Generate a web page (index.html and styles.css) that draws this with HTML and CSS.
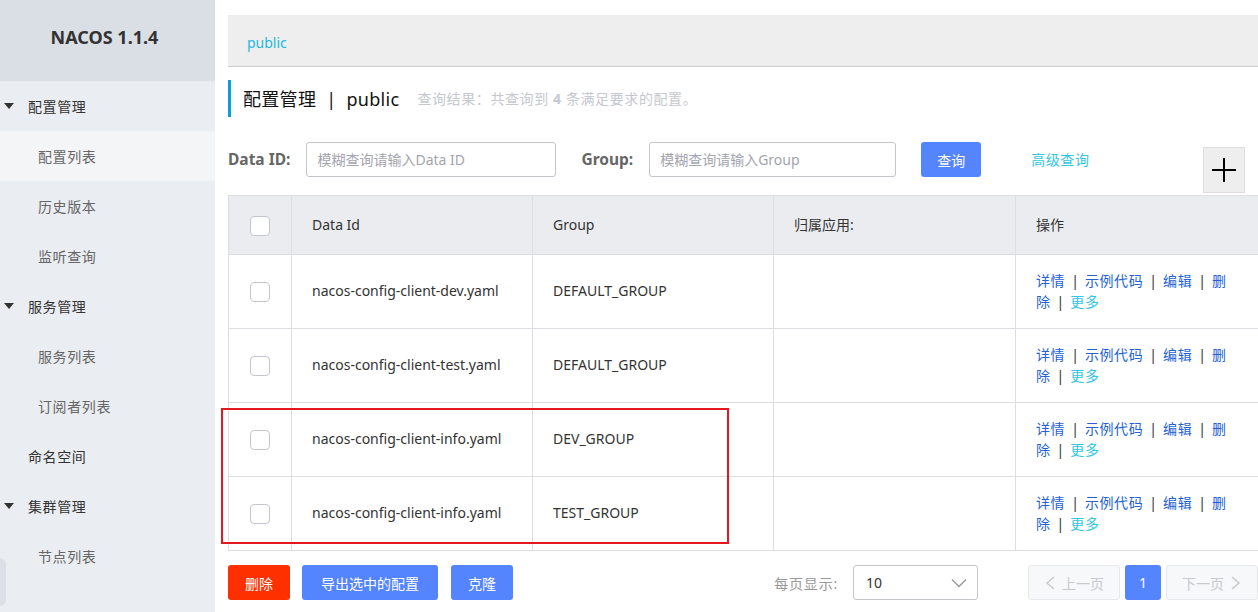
FILE: index.html
```html
<!DOCTYPE html>
<html lang="zh-CN">
<head>
<meta charset="utf-8">
<title>NACOS 1.1.4</title>
<link rel="stylesheet" href="styles.css">
</head>
<body>
<div class="app">
  <aside class="sidebar">
    <div class="brand">NACOS 1.1.4</div>
    <ul class="menu">
      <li class="group">配置管理</li>
      <li class="item active">配置列表</li>
      <li class="item">历史版本</li>
      <li class="item">监听查询</li>
      <li class="group">服务管理</li>
      <li class="item">服务列表</li>
      <li class="item">订阅者列表</li>
      <li class="top">命名空间</li>
      <li class="group">集群管理</li>
      <li class="item">节点列表</li>
    </ul>
    <div class="handle"></div>
  </aside>

  <main class="main">
    <div class="crumb"><span class="ns">public</span></div>

    <div class="title">
      <span class="title-main">配置管理<span class="title-sep">|</span>public</span>
      <span class="summary">查询结果：共查询到 <b>4</b> 条满足要求的配置。</span>
    </div>

    <div class="search">
      <label class="label">Data ID:</label>
      <input class="input" type="text" placeholder="模糊查询请输入Data ID">
      <label class="label">Group:</label>
      <input class="input input-group" type="text" placeholder="模糊查询请输入Group">
      <button class="btn btn-primary btn-query" type="button">查询</button>
      <span class="adv">高级查询</span>
      <button class="plus" type="button" aria-label="新建">
        <svg width="26" height="26" viewBox="0 0 26 26"><path d="M13 1v24M1 13h24" stroke="#000" stroke-width="2" fill="none"/></svg>
      </button>
    </div>

    <div class="table-wrap">
      <table class="grid">
        <colgroup>
          <col class="c-check"><col class="c-id"><col class="c-group"><col class="c-app"><col class="c-ops">
        </colgroup>
        <thead>
          <tr>
            <th class="cell-check"><span class="checkbox"></span></th>
            <th>Data Id</th>
            <th>Group</th>
            <th>归属应用:</th>
            <th>操作</th>
          </tr>
        </thead>
        <tbody>
          <tr>
            <td class="cell-check"><span class="checkbox"></span></td>
            <td>nacos-config-client-dev.yaml</td>
            <td>DEFAULT_GROUP</td>
            <td></td>
            <td><div class="ops"><a>详情</a><span class="sep">|</span><a>示例代码</a><span class="sep">|</span><a>编辑</a><span class="sep">|</span><a>删<wbr>除</a><span class="sep">|</span><a class="more">更多</a></div></td>
          </tr>
          <tr>
            <td class="cell-check"><span class="checkbox"></span></td>
            <td>nacos-config-client-test.yaml</td>
            <td>DEFAULT_GROUP</td>
            <td></td>
            <td><div class="ops"><a>详情</a><span class="sep">|</span><a>示例代码</a><span class="sep">|</span><a>编辑</a><span class="sep">|</span><a>删<wbr>除</a><span class="sep">|</span><a class="more">更多</a></div></td>
          </tr>
          <tr>
            <td class="cell-check"><span class="checkbox"></span></td>
            <td>nacos-config-client-info.yaml</td>
            <td>DEV_GROUP</td>
            <td></td>
            <td><div class="ops"><a>详情</a><span class="sep">|</span><a>示例代码</a><span class="sep">|</span><a>编辑</a><span class="sep">|</span><a>删<wbr>除</a><span class="sep">|</span><a class="more">更多</a></div></td>
          </tr>
          <tr>
            <td class="cell-check"><span class="checkbox"></span></td>
            <td>nacos-config-client-info.yaml</td>
            <td>TEST_GROUP</td>
            <td></td>
            <td><div class="ops"><a>详情</a><span class="sep">|</span><a>示例代码</a><span class="sep">|</span><a>编辑</a><span class="sep">|</span><a>删<wbr>除</a><span class="sep">|</span><a class="more">更多</a></div></td>
          </tr>
        </tbody>
      </table>
      <div class="highlight"></div>
    </div>

    <div class="footer">
      <button class="btn btn-danger" type="button">删除</button>
      <button class="btn btn-primary btn-wide" type="button">导出选中的配置</button>
      <button class="btn btn-primary" type="button">克隆</button>

      <div class="pager-area">
        <span class="page-size-label">每页显示:</span>
        <div class="select">
          <span>10</span>
          <svg width="16" height="10" viewBox="0 0 16 10"><path d="M1 1.5l7 7 7-7" stroke="#999" stroke-width="1.4" fill="none"/></svg>
        </div>
        <div class="pager">
          <span class="page-btn disabled">
            <svg width="12" height="14" viewBox="0 0 12 14"><path d="M10 1L3 7l7 6" stroke="#c8c9cc" stroke-width="1.5" fill="none"/></svg>
            上一页
          </span>
          <span class="page-num">1</span>
          <span class="page-btn disabled">
            下一页
            <svg width="12" height="14" viewBox="0 0 12 14"><path d="M2 1l7 6-7 6" stroke="#c8c9cc" stroke-width="1.5" fill="none"/></svg>
          </span>
        </div>
      </div>
    </div>
  </main>
</div>
</body>
</html>
```
FILE: styles.css
```css
* { box-sizing: border-box; }

html, body {
  margin: 0;
  height: 100%;
  overflow: hidden;
}

body {
  font-family: "Noto Sans", "Noto Sans CJK SC", sans-serif;
  font-size: 14px;
  color: #333;
  background: #fff;
}

.app {
  display: flex;
  height: 612px;
}

/* ---------- sidebar ---------- */
.sidebar {
  width: 215px;
  flex: none;
  background: #eaedf1;
  position: relative;
}

.brand {
  height: 81px;
  background: #dadee5;
  display: flex;
  align-items: center;
  justify-content: center;
  padding: 0 6px 7px 0;
  font-size: 18px;
  font-weight: 700;
  color: #333;
}

.menu {
  list-style: none;
  margin: 0;
  padding: 0;
  letter-spacing: 0.6px;
}

.menu li {
  height: 50px;
  display: flex;
  align-items: center;
  padding-bottom: 1px;
}

.menu .group {
  padding-left: 4px;
  color: #333;
}

.menu .group::before {
  content: "";
  width: 0;
  height: 0;
  border-left: 5px solid transparent;
  border-right: 5px solid transparent;
  border-top: 6px solid #333;
  margin-right: 14px;
}

.menu .top {
  padding-left: 28px;
  color: #333;
}

.menu .item {
  padding-left: 38px;
  color: #666;
}

.menu .item.active {
  background: #f4f5f7;
}

.handle {
  position: absolute;
  left: 0;
  top: 558px;
  width: 6px;
  height: 48px;
  background: #dcdfe6;
  border-radius: 0 6px 6px 0;
}

/* ---------- main ---------- */
.main {
  flex: 1;
  min-width: 0;
  padding: 15px 0 0 13px;
}

.crumb {
  height: 52px;
  background: #eee;
  border-bottom: 1px solid #ccc;
  padding: 3px 0 0 19px;
  display: flex;
  align-items: center;
}

.ns { color: #1fb8d9; }

.title {
  margin-top: 13px;
  height: 37px;
  border-left: 3px solid #0a9fd8;
  padding-left: 12px;
  display: flex;
  align-items: center;
  padding-bottom: 1px;
}

.title-main {
  font-size: 18px;
  color: #111;
  letter-spacing: 0.3px;
}

.title-sep { margin: 0 10px; }

.summary {
  margin-left: 18px;
  color: #c5c8ce;
  letter-spacing: 0.6px;
}

.summary b { font-weight: 700; }

/* ---------- search ---------- */
.search {
  margin-top: 25px;
  display: flex;
  align-items: flex-start;
  height: 51px;
}

.label {
  line-height: 35px;
  font-size: 15.5px;
  font-weight: 700;
  color: #666;
  margin-right: 16px;
}

.input {
  width: 250px;
  height: 35px;
  border: 1px solid #c4c6cf;
  border-radius: 3px;
  padding: 0 10px;
  font: inherit;
  color: #333;
  margin-right: 25px;
  outline: none;
}

.input-group { width: 247px; }

.input::placeholder { color: #a3a5ae; }

.btn {
  height: 35px;
  border: none;
  border-radius: 3px;
  padding: 0 17px;
  font: inherit;
  color: #fff;
  cursor: pointer;
  margin-right: 12px;
}

.btn-primary { background: #5584ff; }
.btn-danger { background: #ff3000; }
.btn-wide { padding: 0 19px; margin-right: 13px; }
.btn-query { padding: 0 16px; margin-right: 50px; }

.adv {
  line-height: 35px;
  color: #33c6e3;
  letter-spacing: 0.6px;
}

.plus {
  margin: 5px 13px 0 auto;
  width: 42px;
  height: 46px;
  background: #eee;
  border: 1px solid #ddd;
  padding: 0;
  display: flex;
  align-items: center;
  justify-content: center;
}

/* ---------- table ---------- */
.table-wrap {
  position: relative;
  margin-top: 2px;
}

.grid {
  width: 1030px;
  border-collapse: collapse;
  table-layout: fixed;
}

.c-check { width: 63px; }
.c-id { width: 241px; }
.c-group { width: 241px; }
.c-app { width: 242px; }
.c-ops { width: 243px; }

.grid th,
.grid td {
  border: 1px solid #dcdee3;
  padding: 0 20px 2px;
  text-align: left;
  vertical-align: middle;
  font-weight: 400;
  color: #333;
}

.grid th {
  height: 59px;
  background: #ebecf0;
}

.grid td { height: 74px; }

.grid .cell-check {
  padding: 0;
  text-align: center;
}

.checkbox {
  display: inline-block;
  width: 20px;
  height: 20px;
  border: 1px solid #c4c6cf;
  border-radius: 4px;
  background: #fff;
  vertical-align: middle;
}

.ops {
  width: 200px;
  line-height: 21px;
  letter-spacing: 0.6px;
}

.ops a { color: #2462d4; }
.ops a.more { color: #33c6e3; }

.sep {
  display: inline-block;
  margin: 0 6px;
  color: #333;
  letter-spacing: 0;
}

.highlight {
  position: absolute;
  left: -7px;
  top: 213px;
  width: 508px;
  height: 136px;
  border: 2px solid #e3191f;
  pointer-events: none;
}

/* ---------- footer ---------- */
.footer {
  margin-top: 14px;
  display: flex;
  align-items: center;
}

.pager-area {
  margin-left: auto;
  display: flex;
  align-items: center;
}

.page-size-label {
  color: #999;
  margin-right: 15px;
  letter-spacing: 0.8px;
}

.select {
  width: 125px;
  height: 35px;
  border: 1px solid #c4c6cf;
  border-radius: 3px;
  padding: 0 10px 0 12px;
  display: flex;
  align-items: center;
  justify-content: space-between;
  margin-right: 50px;
}

.pager {
  display: flex;
  gap: 5px;
}

.page-btn {
  width: 92px;
  height: 35px;
  border: 1px solid #e6e7eb;
  border-radius: 3px;
  background: #f7f8fa;
  color: #c8c9cc;
  display: flex;
  align-items: center;
  justify-content: center;
  gap: 6px;
}

.page-num {
  width: 36px;
  height: 35px;
  border-radius: 3px;
  background: #5584ff;
  color: #fff;
  display: flex;
  align-items: center;
  justify-content: center;
}
```
